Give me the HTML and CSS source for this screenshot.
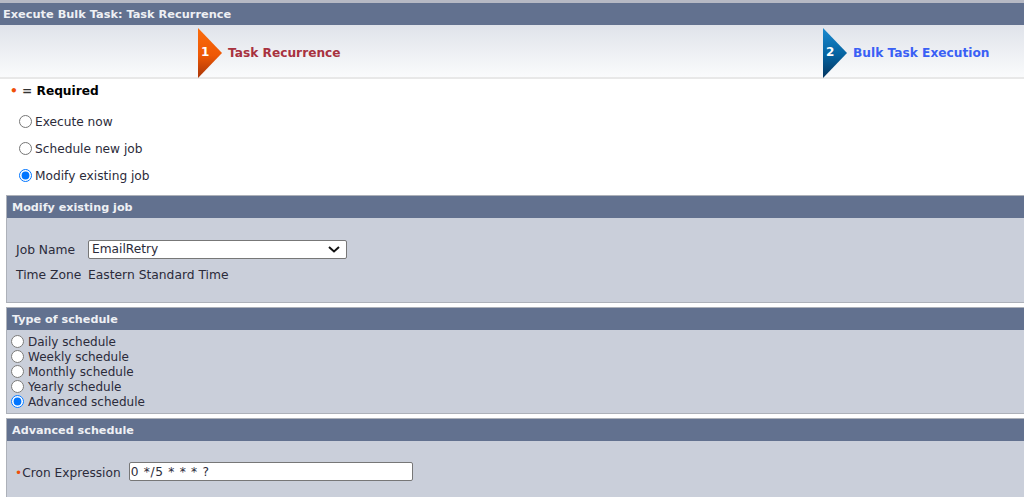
FILE: index.html
```html
<!DOCTYPE html>
<html lang="en">
<head>
  <meta charset="UTF-8">
  <meta name="viewport" content="width=device-width, initial-scale=1.0">
  <title>Execute Bulk Task</title>
  <link rel="stylesheet" href="styles.css">
</head>
<body>
  <div class="page">
    <h1 class="title-bar">Execute Bulk Task: Task Recurrence</h1>

    <div class="steps">
      <div class="step step-one">
        <svg class="step-arrow" width="25" height="50" viewBox="0 0 25 50">
          <defs>
            <linearGradient id="orange" x1="0" y1="0" x2="0" y2="1">
              <stop offset="0" stop-color="#fa6c0c"/>
              <stop offset="0.55" stop-color="#ee5805"/>
              <stop offset="1" stop-color="#a83508"/>
            </linearGradient>
          </defs>
          <polygon points="0,0 24,25 0,50" fill="url(#orange)"/>
        </svg>
        <span class="step-num">1</span>
        <span class="step-label">Task Recurrence</span>
      </div>
      <div class="step step-two">
        <svg class="step-arrow" width="25" height="50" viewBox="0 0 25 50">
          <defs>
            <linearGradient id="blue" x1="0" y1="0" x2="0" y2="1">
              <stop offset="0" stop-color="#1a8ad0"/>
              <stop offset="0.55" stop-color="#05629f"/>
              <stop offset="1" stop-color="#04355f"/>
            </linearGradient>
          </defs>
          <polygon points="0,0 24,25 0,50" fill="url(#blue)"/>
        </svg>
        <span class="step-num">2</span>
        <span class="step-label">Bulk Task Execution</span>
      </div>
    </div>

    <div class="required"><span class="dot">•</span> = <b>Required</b></div>

    <div class="run-options">
      <label class="run-option"><input type="radio" name="run"> Execute now</label>
      <label class="run-option"><input type="radio" name="run"> Schedule new job</label>
      <label class="run-option"><input type="radio" name="run" checked> Modify existing job</label>
    </div>

    <section class="panel panel-job">
      <h2 class="panel-head">Modify existing job</h2>
      <div class="job-body">
        <div class="field-row">
          <span class="field-label">Job Name</span>
          <div class="select-wrap">
            <select class="job-select"><option>EmailRetry</option></select>
            <svg class="select-arrow" width="12" height="7" viewBox="0 0 12 7">
              <path d="M1 1l5 4.5L11 1" fill="none" stroke="#111" stroke-width="2"/>
            </svg>
          </div>
        </div>
        <div class="field-row zone-row">
          <span class="field-label">Time Zone</span>
          <span>Eastern Standard Time</span>
        </div>
      </div>
    </section>

    <section class="panel panel-type">
      <h2 class="panel-head">Type of schedule</h2>
      <div class="type-body">
        <label class="type-option"><input type="radio" name="type"> Daily schedule</label>
        <label class="type-option"><input type="radio" name="type"> Weekly schedule</label>
        <label class="type-option"><input type="radio" name="type"> Monthly schedule</label>
        <label class="type-option"><input type="radio" name="type"> Yearly schedule</label>
        <label class="type-option"><input type="radio" name="type" checked> Advanced schedule</label>
      </div>
    </section>

    <section class="panel panel-cron">
      <h2 class="panel-head">Advanced schedule</h2>
      <div class="cron-body">
        <span class="cron-label"><span class="dot">•</span>Cron Expression</span>
        <input class="cron-input" type="text" value="0 */5 * * * ?">
      </div>
    </section>
  </div>
</body>
</html>
```

FILE: styles.css
```css
html, body {
  margin: 0;
  padding: 0;
  background: #fff;
}

body {
  font-family: "DejaVu Sans", Verdana, sans-serif;
  font-size: 12.2px;
  color: #2b2b3a;
}

.page {
  height: 497px;
  overflow: hidden;
  border-top: 3px solid #b6b9c4;
  box-sizing: border-box;
}

.title-bar {
  margin: 0;
  height: 22px;
  padding-left: 3px;
  line-height: 23px;
  font-size: 11.35px;
  font-weight: bold;
  color: #eef0f4;
  background: #62718f;
}

.steps {
  display: flex;
  height: 54px;
  padding-top: 3px;
  box-sizing: border-box;
  background: linear-gradient(#e0e3ea, #fafbfc);
  border-bottom: 2px solid #e8e8e8;
}

.step {
  position: relative;
  display: flex;
  align-items: center;
  height: 50px;
}

.step-one {
  margin-left: 198px;
  width: 625px;
}

.step-arrow {
  flex: none;
}

.step-num {
  position: absolute;
  left: 3px;
  top: 17px;
  font-size: 12px;
  font-weight: bold;
  color: #fff;
}

.step-label {
  margin-left: 5px;
  font-size: 12.2px;
  font-weight: bold;
}

.step-one .step-label {
  color: #a8323f;
}

.step-two .step-label {
  color: #3a60f5;
}

.required {
  padding: 5px 0 0 10px;
  height: 21px;
  line-height: 15px;
  font-weight: bold;
  color: #333;
}

.required b {
  color: #000;
}

.dot {
  color: #f0500a;
}

.run-options {
  padding-left: 19px;
  margin-top: 3px;
}

.run-option {
  display: flex;
  align-items: center;
  height: 27px;
  gap: 3px;
}

input[type="radio"] {
  margin: 0;
  width: 13px;
  height: 13px;
}

.panel {
  margin-left: 6px;
  border: 1px solid #adb1b9;
  border-right: 0;
  background: #cacfda;
}

.panel-head {
  margin: 0;
  height: 22px;
  padding-left: 5px;
  line-height: 23px;
  font-size: 11.2px;
  font-weight: bold;
  color: #eef0f4;
  background: #62718f;
}

.panel-job {
  margin-top: 6px;
}

.job-body {
  height: 84px;
  padding: 23px 0 0 9px;
  box-sizing: border-box;
  font-size: 12.3px;
}

.field-row {
  display: flex;
  align-items: center;
  height: 18px;
}

.zone-row {
  margin-top: 7px;
}

.field-label {
  width: 72px;
}

.select-wrap {
  position: relative;
  display: flex;
  margin-bottom: 2px;
}

.select-arrow {
  position: absolute;
  right: 7px;
  top: 6px;
  pointer-events: none;
}

.job-select {
  appearance: none;
  width: 259px;
  height: 19px;
  padding: 0 0 0 3px;
  font-family: inherit;
  font-size: 12.2px;
  background: #fff;
  color: #2b2b3a;
  border: 1px solid #777;
  border-radius: 2px;
}

.panel-type {
  margin-top: 4px;
}

.type-body {
  height: 83px;
  padding-top: 4px;
  padding-left: 4px;
  box-sizing: border-box;
  font-size: 12px;
}

.type-option {
  display: flex;
  align-items: center;
  height: 15px;
  gap: 4px;
}

.panel-cron {
  margin-top: 4px;
}

.cron-body {
  display: flex;
  align-items: center;
  padding: 21px 0 60px 8px;
}

.cron-label {
  padding-top: 2px;
}

.cron-input {
  width: 284px;
  height: 19px;
  margin-left: 8px;
  padding: 0 1px;
  box-sizing: border-box;
  font-family: inherit;
  font-size: 12.2px;
  letter-spacing: 0.7px;
  color: #2b2b3a;
  border: 1px solid #777;
  border-radius: 2px;
}
```
